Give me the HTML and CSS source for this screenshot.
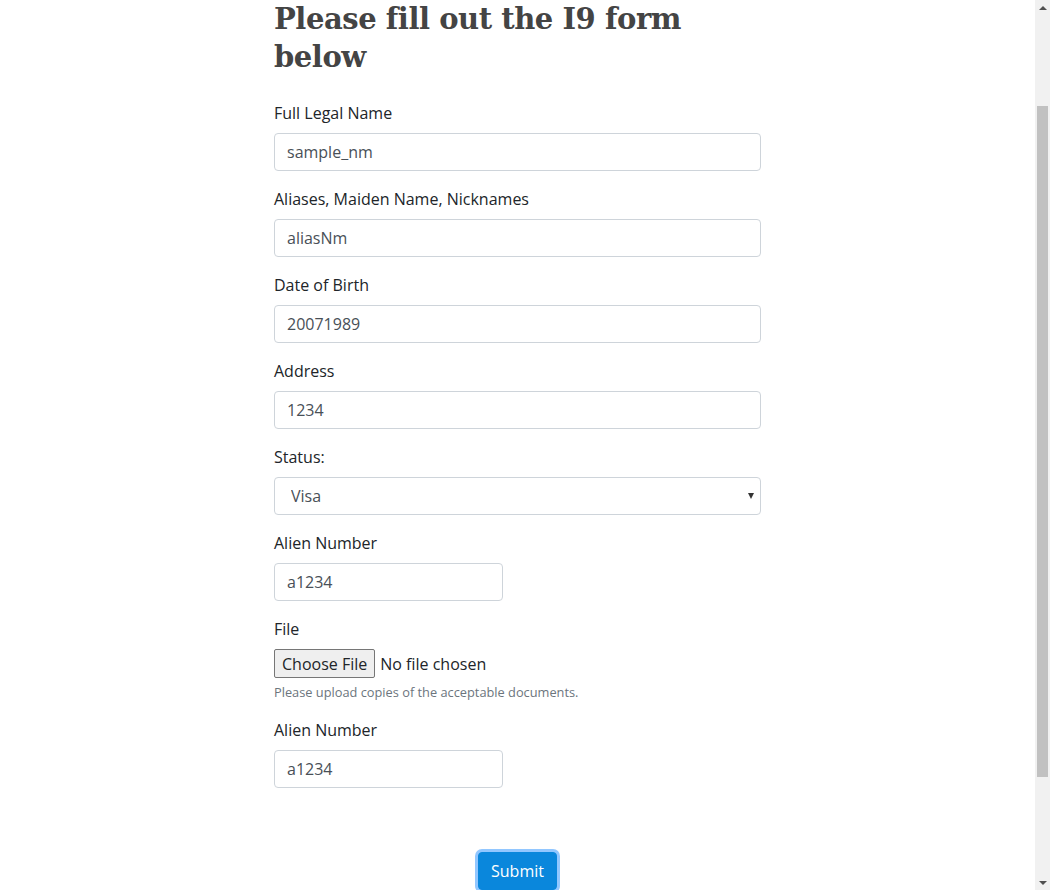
FILE: index.html
```html
<!DOCTYPE html>
<html lang="en">
<head>
<meta charset="utf-8">
<title>I9 Form</title>
<link rel="stylesheet" href="styles.css">
</head>
<body>
<div class="app">
  <div class="page">
    <main class="container">
      <h2 class="title">Please fill out the I9 form below</h2>
      <form class="form">
        <div class="form-group">
          <label for="nm">Full Legal Name</label>
          <input id="nm" class="form-control" type="text" value="sample_nm">
        </div>
        <div class="form-group">
          <label for="alias">Aliases, Maiden Name, Nicknames</label>
          <input id="alias" class="form-control" type="text" value="aliasNm">
        </div>
        <div class="form-group">
          <label for="dob">Date of Birth</label>
          <input id="dob" class="form-control" type="text" value="20071989">
        </div>
        <div class="form-group">
          <label for="addr">Address</label>
          <input id="addr" class="form-control" type="text" value="1234">
        </div>
        <div class="form-group">
          <label for="status">Status:</label>
          <div class="select-wrap">
            <select id="status" class="form-control select">
              <option>Visa</option>
              <option>Citizen</option>
              <option>Permanent Resident</option>
            </select>
          </div>
        </div>
        <div class="form-group half-row">
          <div class="half">
            <label for="alien1">Alien Number</label>
            <input id="alien1" class="form-control" type="text" value="a1234">
          </div>
        </div>
        <div class="form-group">
          <label for="file">File</label>
          <input id="file" class="form-control-file" type="file">
          <small class="help">Please upload copies of the acceptable documents.</small>
        </div>
        <div class="form-group half-row">
          <div class="half">
            <label for="alien2">Alien Number</label>
            <input id="alien2" class="form-control" type="text" value="a1234">
          </div>
        </div>
        <div class="actions">
          <button type="button" class="btn-submit">Submit</button>
        </div>
      </form>
    </main>
  </div>
  <div class="scrollbar" aria-hidden="true">
    <div class="sb-btn sb-up"><span class="tri-up"></span></div>
    <div class="sb-track"><div class="sb-thumb"></div></div>
    <div class="sb-btn sb-down"><span class="tri-down"></span></div>
  </div>
</div>
</body>
</html>
```

FILE: styles.css
```css
* { box-sizing: border-box; }
html, body { margin: 0; padding: 0; }
body {
  font-family: "Open Sans", "Noto Sans", sans-serif;
  font-size: 16px;
  line-height: 1.5;
  color: #212529;
  background: #fff;
  overflow: hidden;
}
.app {
  display: flex;
  height: 100vh;
}
.page {
  flex: 1;
  min-width: 0;
  overflow: hidden;
}
.container {
  width: 487px;
  margin: 0 auto;
  padding: 0;
}
.title {
  font-family: "DejaVu Serif", serif;
  font-weight: 700;
  font-size: 29px;
  line-height: 38px;
  color: #444;
  margin: 0 0 25px;
  letter-spacing: -0.45px;
}
.form-group { margin-bottom: 16px; }
label {
  display: block;
  margin-bottom: 8px;
}
.form-control {
  display: block;
  width: 100%;
  height: 38px;
  padding: 6px 12px;
  font-family: inherit;
  font-size: 16px;
  line-height: 1.5;
  color: #495057;
  background: #fff;
  border: 1px solid #ced4da;
  border-radius: 4px;
  outline: none;
}
.select-wrap { position: relative; }
.select {
  -webkit-appearance: none;
  appearance: none;
  padding-left: 16px;
  padding-right: 28px;
}
.select-wrap::after {
  content: "";
  position: absolute;
  right: 7px;
  top: 16px;
  border-left: 3.5px solid transparent;
  border-right: 3.5px solid transparent;
  border-top: 6px solid #333;
  pointer-events: none;
}
.half-row {
  display: grid;
  grid-template-columns: 1fr 1fr;
  column-gap: 30px;
}
.form-control-file {
  display: block;
  width: 100%;
  font-family: inherit;
  font-size: 16px;
  line-height: 29px;
  color: #212529;
}
.form-control-file::file-selector-button {
  font-family: inherit;
  font-size: 16px;
  height: 29px;
  padding: 0 7px;
  margin-right: 5px;
  color: #212529;
  background: #efefef;
  border: 1px solid #767676;
  border-radius: 2px;
}
.help {
  display: block;
  margin-top: 4px;
  font-size: 12.8px;
  color: #6c757d;
}
.actions {
  display: flex;
  justify-content: center;
  margin-top: 64px;
}
.btn-submit {
  font-family: inherit;
  font-size: 16px;
  line-height: 1.5;
  color: #fff;
  background: #0a87dc;
  border: 1px solid #0a87dc;
  border-radius: 4px;
  padding: 6px 12px;
  box-shadow: 0 0 0 3px rgba(38, 143, 255, 0.5);
  cursor: pointer;
}

/* scrollbar column */
.scrollbar {
  width: 15px;
  flex: 0 0 15px;
  background: #f1f1f1;
  display: flex;
  flex-direction: column;
}
.sb-btn {
  height: 15px;
  display: flex;
  align-items: center;
  justify-content: center;
}
.tri-up {
  width: 0;
  height: 0;
  border-left: 4px solid transparent;
  border-right: 4px solid transparent;
  border-bottom: 4px solid #505050;
}
.tri-down {
  width: 0;
  height: 0;
  border-left: 4px solid transparent;
  border-right: 4px solid transparent;
  border-top: 4px solid #505050;
}
.sb-track {
  flex: 1;
  padding: 91px 2px 0;
}
.sb-thumb {
  height: 671px;
  background: #c1c1c1;
}
```
